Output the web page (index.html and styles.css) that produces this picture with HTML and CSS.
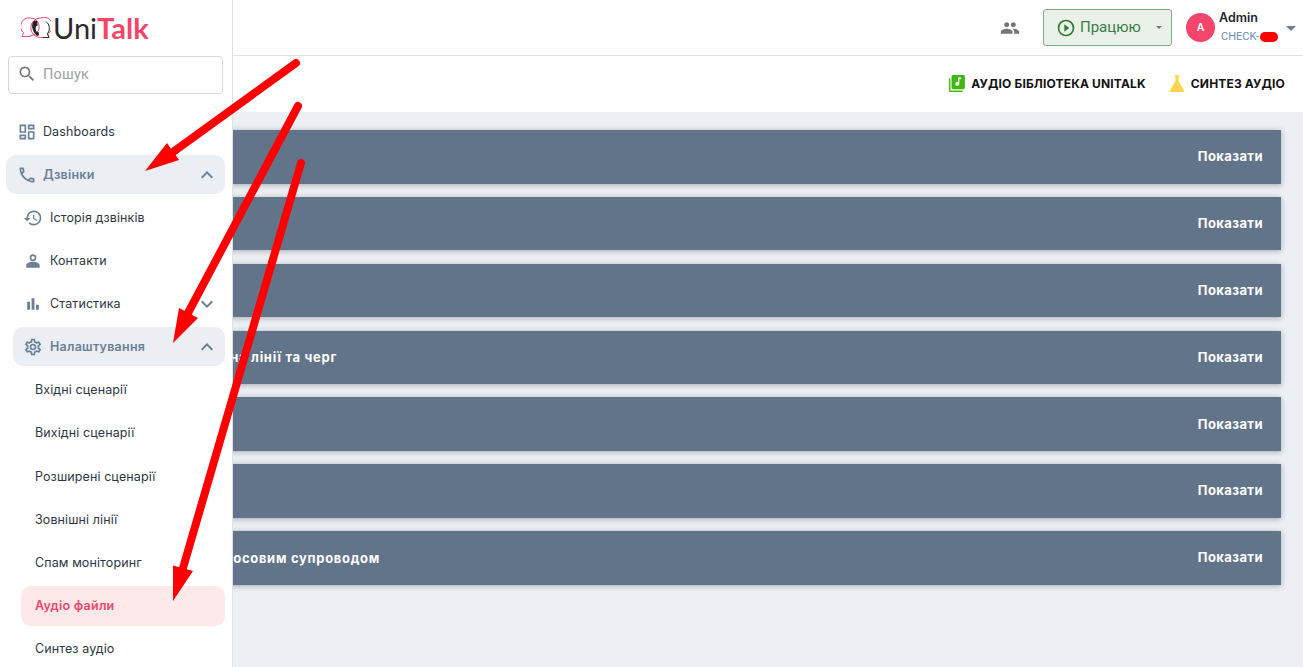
FILE: index.html
```html
<!DOCTYPE html>
<html lang="uk">
<head>
<meta charset="utf-8">
<title>UniTalk</title>
<link rel="stylesheet" href="styles.css">
</head>
<body>
<div class="app">
  <aside class="sidebar">
    <div class="logo">
      <svg class="logo-mark" viewBox="0 0 30 22" width="30" height="22">
        <path d="M9.500 1a8.500 8.500 0 0 1 0 17.500q-.5.900 0 1H1l1.500-3.800A8.500 8.500 0 0 1 9.500 1z" fill="none" stroke="#f4456a" stroke-width="1"/>
        <path d="M19.500 1a8.500 8.500 0 0 1 7 15.700l1.500 3.800h-8.500a8.500 8.500 0 0 1 0-19.500z" fill="none" stroke="#f4456a" stroke-width="1"/>
        <path d="M25 4.500a8.500 8.500 0 0 1 1.500 12.200l1.500 3.800h-6" fill="none" stroke="#2b2b2b" stroke-width="1"/>
        <path d="M13.500 3.500c-3.500 3-3.500 9.500 2.500 15.500l2-.8-.3-3.200-1.700.3c-1.500-2-1.700-4.300-.8-6.300l1.500-.5-.5-4.500z" fill="#222"/>
      </svg>
      <span class="logo-text">Uni<b>Talk</b></span>
    </div>
    <div class="search">
      <svg class="search-icon" viewBox="0 0 24 24" width="20" height="20"><path d="M15.500 14h-.79l-.28-.27A6.470 6.470 0 0 0 16 9.500 6.500 6.500 0 1 0 9.500 16c1.610 0 3.090-.59 4.230-1.570l.27.28v.79l5 4.990L20.490 19l-4.990-5zm-6 0C7.010 14 5 11.990 5 9.500S7.010 5 9.500 5 14 7.010 14 9.500 11.990 14 9.500 14z"/></svg>
      <span class="search-text">Пошук</span>
    </div>
    <nav class="menu">
      <a class="item lvl0">
        <svg class="ico" viewBox="0 0 24 24"><path d="M3 3h8v10H3V3zm2 2v6h4V5H5zm8-2h8v6h-8V3zm2 2v2h4V5h-4zm-2 6h8v10h-8V11zm2 2v6h4v-6h-4zM3 15h8v6H3v-6zm2 2v2h4v-2H5z"/></svg>
        <span>Dashboards</span>
      </a>
      <a class="item lvl0 open">
        <svg class="ico" viewBox="0 0 24 24"><path d="M6.540 5c.06.890.21 1.760.45 2.590l-1.200 1.200c-.41-1.200-.67-2.470-.76-3.790h1.510m9.860 12.020c.85.240 1.720.39 2.600.45v1.490c-1.320-.09-2.590-.35-3.800-.75l1.200-1.190M7.500 3H4c-.55 0-1 .45-1 1 0 9.390 7.610 17 17 17 .55 0 1-.45 1-1v-3.490c0-.55-.45-1-1-1-1.240 0-2.450-.2-3.570-.57a.84.84 0 0 0-.31-.05c-.26 0-.51.1-.71.29l-2.200 2.200a15.150 15.150 0 0 1-6.590-6.590l2.200-2.200c.28-.28.36-.67.25-1.020A11.360 11.360 0 0 1 8.500 4c0-.55-.45-1-1-1z"/></svg>
        <span>Дзвінки</span>
        <svg class="chev" viewBox="0 0 24 24"><path d="M7.410 15.410 12 10.830l4.590 4.580L18 14l-6-6-6 6z"/></svg>
      </a>
      <a class="item lvl1">
        <svg class="ico" viewBox="0 0 24 24"><path d="M13 3a9 9 0 0 0-9 9H1l3.890 3.890.07.140L9 12H6a7 7 0 1 1 2.050 4.950l-1.420 1.420A9 9 0 1 0 13 3zm-1 5v5l4.280 2.540.72-1.210-3.500-2.080V8H12z"/></svg>
        <span>Історія дзвінків</span>
      </a>
      <a class="item lvl1">
        <svg class="ico" viewBox="0 0 24 24"><path d="M12 5.900a2.100 2.100 0 1 1 0 4.200 2.100 2.100 0 0 1 0-4.200M12 4a4 4 0 1 0 0 8 4 4 0 0 0 0-8zm0 9c-2.670 0-8 1.340-8 4v3h16v-3c0-2.660-5.330-4-8-4z"/></svg>
        <span>Контакти</span>
      </a>
      <a class="item lvl1">
        <svg class="ico" viewBox="0 0 24 24"><path d="M5 9.200h3.400V19H5V9.200zM10.300 5h3.400v14h-3.400V5zm5.300 8H19v6h-3.400v-6z"/></svg>
        <span>Статистика</span>
        <svg class="chev" viewBox="0 0 24 24"><path d="M7.410 8.590 12 13.170l4.590-4.580L18 10l-6 6-6-6z"/></svg>
      </a>
      <a class="item lvl1 open">
        <svg class="ico" viewBox="0 0 24 24"><path d="M19.430 12.980c.04-.32.070-.64.070-.98s-.03-.66-.07-.98l2.110-1.650c.19-.15.240-.42.120-.64l-2-3.460a.5.500 0 0 0-.61-.22l-2.490 1c-.52-.4-1.080-.73-1.690-.98l-.38-2.650A.488.488 0 0 0 14 2h-4c-.25 0-.46.180-.49.420l-.38 2.650c-.61.250-1.170.59-1.690.98l-2.490-1a.566.566 0 0 0-.18-.03c-.17 0-.34.090-.43.250l-2 3.460c-.13.220-.07.490.12.640l2.110 1.650c-.04.320-.07.650-.07.980s.03.660.07.980l-2.110 1.650c-.19.150-.24.420-.12.640l2 3.460a.5.500 0 0 0 .61.220l2.490-1c.52.400 1.080.730 1.690.980l.38 2.650c.03.240.24.420.49.420h4c.25 0 .46-.18.49-.42l.38-2.650c.61-.25 1.170-.59 1.690-.98l2.490 1c.06.020.12.030.18.030.17 0 .34-.09.430-.25l2-3.460c.12-.22.070-.49-.12-.64l-2.110-1.650zm-1.980-1.710c.04.310.05.520.05.730 0 .21-.02.430-.05.730l-.14 1.130.89.700 1.080.840-.70 1.210-1.270-.51-1.040-.42-.90.680c-.43.320-.84.560-1.250.730l-1.060.43-.16 1.130-.20 1.350h-1.400l-.19-1.350-.16-1.130-1.060-.43c-.43-.18-.83-.41-1.230-.71l-.91-.70-1.060.43-1.270.51-.70-1.210 1.080-.84.890-.70-.14-1.130A8.070 8.070 0 0 1 6.500 12c0-.20.020-.43.050-.73l.14-1.130-.89-.70-1.080-.84.700-1.210 1.270.51 1.040.42.900-.68c.43-.32.840-.56 1.250-.73l1.060-.43.160-1.130.20-1.350h1.390l.19 1.350.16 1.130 1.060.43c.43.180.83.410 1.230.71l.91.700 1.060-.43 1.270-.51.700 1.210-1.070.85-.89.700.14 1.130zM12 8a4 4 0 1 0 0 8 4 4 0 0 0 0-8zm0 6a2 2 0 1 1 0-4 2 2 0 0 1 0 4z"/></svg>
        <span>Налаштування</span>
        <svg class="chev" viewBox="0 0 24 24"><path d="M7.410 15.410 12 10.830l4.590 4.580L18 14l-6-6-6 6z"/></svg>
      </a>
      <a class="item lvl2">Вхідні сценарії</a>
      <a class="item lvl2">Вихідні сценарії</a>
      <a class="item lvl2">Розширені сценарії</a>
      <a class="item lvl2">Зовнішні лінії</a>
      <a class="item lvl2">Спам моніторинг</a>
      <a class="item lvl2 active">Аудіо файли</a>
      <a class="item lvl2">Синтез аудіо</a>
    </nav>
  </aside>

  <main class="main">
    <header class="topbar">
      <svg class="people" viewBox="0 0 24 24" width="20" height="20"><path d="M16 11c1.660 0 2.990-1.340 2.990-3S17.660 5 16 5s-3 1.340-3 3 1.340 3 3 3zm-8 0c1.660 0 2.990-1.340 2.990-3S9.660 5 8 5 5 6.340 5 8s1.340 3 3 3zm0 2c-2.330 0-7 1.170-7 3.500V19h14v-2.500C15 14.170 10.330 13 8 13zm8 0c-.29 0-.62.020-.97.050 1.160.84 1.970 1.970 1.970 3.450V19h6v-2.500c0-2.330-4.670-3.500-7-3.500z"/></svg>
      <div class="status">
        <svg class="play" viewBox="0 0 24 24" width="20" height="20"><path d="M10 16.500l6-4.500-6-4.500v9zM12 2a10 10 0 1 0 0 20 10 10 0 0 0 0-20zm0 18a8 8 0 1 1 0-16 8 8 0 0 1 0 16z"/></svg>
        <span class="status-text">Працюю</span>
        <i class="caret small"></i>
      </div>
      <div class="user">
        <div class="avatar">A</div>
        <div class="user-text">
          <div class="user-name">Admin</div>
          <div class="user-sub">CHECK-<i class="blob"></i></div>
        </div>
        <i class="caret"></i>
      </div>
    </header>
    <div class="subbar">
      <a class="link">
        <svg viewBox="0 0 20 20" width="19" height="19"><path d="M2 4.500h1.600v12.900h12.900V19H3.500A1.500 1.500 0 0 1 2 17.500z" fill="#52b812"/><rect x="4.800" y="1" width="14" height="15" rx="1.500" fill="#3cb810"/><path d="M13 3.800v6.400a2.100 2.100 0 1 1-1.300-1.900V3.800H15v1.700h-2z" fill="#fff"/></svg>
        <span>АУДІО БІБЛІОТЕКА UNITALK</span>
      </a>
      <a class="link">
        <svg viewBox="0 0 18 20" width="18" height="19"><path d="M6.500 1h5v1.500h-.8v5.200l6 9.800c.4.700-.1 1.500-.9 1.500H2.200c-.8 0-1.300-.8-.9-1.500l6-9.800V2.500h-.8z" fill="#ffd54f"/></svg>
        <span>СИНТЕЗ АУДІО</span>
      </a>
    </div>
    <section class="list">
      <div class="row"><span class="row-action">Показати</span></div>
      <div class="row"><span class="row-action">Показати</span></div>
      <div class="row"><span class="row-action">Показати</span></div>
      <div class="row"><span class="row-title">Користувачі на лінії та черг</span><span class="row-action">Показати</span></div>
      <div class="row"><span class="row-action">Показати</span></div>
      <div class="row"><span class="row-action">Показати</span></div>
      <div class="row"><span class="row-title">Дзвінки з голосовим супроводом</span><span class="row-action">Показати</span></div>
    </section>
  </main>

  <svg class="arrows" viewBox="0 0 1303 667" width="1303" height="667">
    <g class="arrow-shaft">
      <path d="M296 63 173 152"/>
      <path d="M298 106 188 313"/>
      <path d="M301 163 183 568"/>
    </g>
    <g class="arrow-head">
      <path d="M145 171 167 143 179 160z"/>
      <path d="M173 343 179 308 198 318z"/>
      <path d="M173 601 173 565.500 193 571z"/>
    </g>
  </svg>
</div>
</body>
</html>
```

FILE: styles.css
```css
* { box-sizing: border-box; }
html, body { margin: 0; height: 100%; overflow: hidden; }
body { font-family: "Inter", "Liberation Sans", sans-serif; background: #fff; }

.app { position: relative; width: 1303px; height: 667px; overflow: hidden; }

/* Sidebar floats over the main column */
.sidebar {
  position: absolute; left: 0; top: 0; z-index: 2;
  width: 233px; height: 667px; overflow: hidden;
  background: #fff; border-right: 1px solid #dfe1e4;
}
.logo { height: 56px; display: flex; align-items: center; padding: 0 0 0 21px; }
.logo-mark { flex: none; margin-right: 2px; }
.logo-text { font-family: "Lato", sans-serif; font-size: 29px; line-height: 30px; color: #2b2b2b; }
.logo-text b { color: #f4456a; font-weight: 700; }

.search {
  display: flex; align-items: center; height: 38px; margin: 0 9px 18px 8px;
  border: 1px solid #d5d7da; border-radius: 4px; padding: 0 0 2px 8px;
}
.search-icon { fill: #757575; flex: none; }
.search-text { margin-left: 6px; font-family: "Roboto", sans-serif; font-size: 14.500px; color: #a0a0a0; letter-spacing: .2px; }

.menu { display: flex; flex-direction: column; gap: 4px; }
.item {
  display: flex; align-items: center; flex: none; height: 39.070px; margin-right: 7px;
  border-radius: 10px; font-size: 12.500px; color: #2c3744; letter-spacing: .1px;
}
.lvl0 { margin-left: 6px; padding-left: 11px; }
.lvl1 { margin-left: 13px; padding-left: 10px; }
.lvl2 { margin-left: 21px; padding-left: 14px; }
.ico { width: 20px; height: 20px; fill: #6b7f99; flex: none; margin-right: 6px; }
.lvl1 .ico { margin-right: 7px; }
.chev { width: 24px; height: 24px; fill: #6b7f99; flex: none; margin-left: auto; margin-right: 6px; }
.open { background: #ebeef2; color: #6b7f99; font-weight: 600; letter-spacing: .25px; }
.active { background: #fde8ea; color: #f4456a; font-weight: 600; letter-spacing: .25px; height: 40px; margin-bottom: -1px; }

/* Main column */
.main { display: flex; flex-direction: column; height: 667px; background: #eceff4; }
.topbar {
  flex: none; height: 56px; background: #fff; border-bottom: 1px solid #dfe1e4;
  display: flex; align-items: center; justify-content: flex-end; padding-right: 6px;
}
.people { fill: #757575; margin-right: 23px; }
.status {
  display: flex; align-items: center; width: 129px; height: 37px; margin-right: 14px;
  background: #e9f1e9; border: 1px solid #7fae81; border-radius: 3px; padding-left: 12px;
}
.play { fill: #2e7d32; flex: none; }
.status-text { margin: 0 0 1px 4px; font-family: "Roboto", sans-serif; font-size: 15px; color: #3a7d44; }
.caret { display: block; width: 0; height: 0; border-left: 5px solid transparent; border-right: 5px solid transparent; border-top: 5px solid #6b7f99; }
.caret.small { border-left-width: 3.500px; border-right-width: 3.500px; border-top: 3.500px solid #6d8270; margin-left: auto; margin-right: 9px; }
.user { display: flex; align-items: center; width: 111px; }
.avatar {
  width: 29px; height: 29px; border-radius: 50%; background: #f4456a; color: #fff; flex: none;
  display: flex; align-items: center; justify-content: center; font-size: 10.500px; font-weight: 600;
}
.user-text { margin-left: 4px; flex: 1; margin-top: 1px; }
.user-name { font-size: 12.500px; font-weight: 600; line-height: 17px; color: #22262c; }
.user-sub { display: flex; align-items: center; font-family: "Roboto", sans-serif; font-size: 11px; line-height: 21px; color: #6b8db5; padding-left: 2px; }
.blob { display: block; width: 18px; height: 10px; border-radius: 5px; background: #f00; margin-left: 1px; }
.user .caret { margin-right: 1px; margin-top: 2px; }

.subbar {
  flex: none; height: 56px; background: #fff; display: flex; align-items: center; justify-content: flex-end;
  gap: 22px; padding: 0 18px 2px 0;
}
.link { display: flex; align-items: center; gap: 5px; font-size: 12px; font-weight: 700; color: #111; letter-spacing: .16px; }

.list { flex: 1; display: flex; flex-direction: column; gap: 13.350px; padding: 18px 22px 0 0; }
.row {
  flex: none; height: 53.500px; display: flex; align-items: center;
  background: #62748a; color: #fff; padding: 0 18px 0 137px;
  font-size: 13px; font-weight: 700; letter-spacing: .4px;
  box-shadow: 0 1px 6px rgba(0,0,0,.3);
}
.row-title { letter-spacing: .7px; }
.row-action { margin-left: auto; position: relative; top: -.5px; }

.arrows { position: absolute; left: 0; top: 0; z-index: 3; pointer-events: none; }
.arrow-shaft { fill: none; stroke: #f00; stroke-width: 8; stroke-linecap: round; }
.arrow-head { fill: #f00; }
```
